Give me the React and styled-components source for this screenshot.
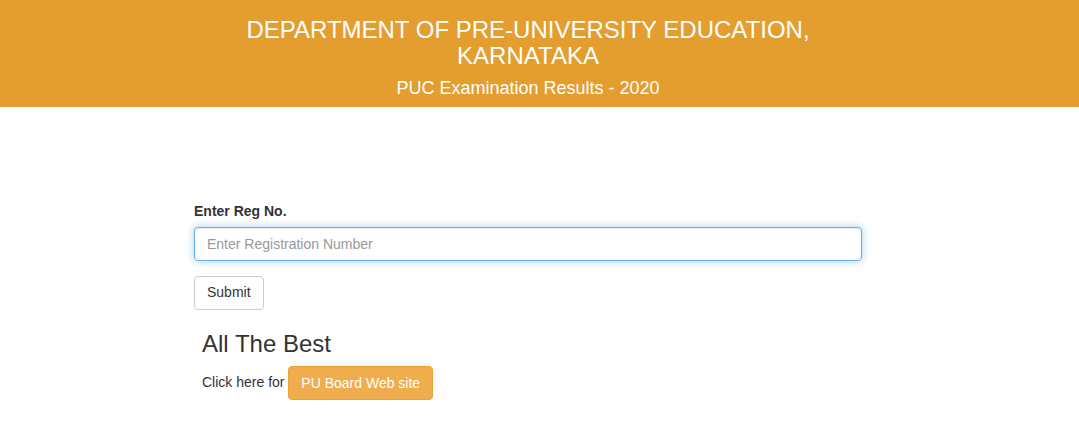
import React from "react";
import styled, { createGlobalStyle } from "styled-components";

const Global = createGlobalStyle`
  * { box-sizing: border-box; }
  html, body { margin: 0; padding: 0; background: #fff; }
  body {
    font-family: "Liberation Sans", Arial, sans-serif;
    font-size: 14px;
    line-height: 1.42857;
    color: #333;
  }
`;

const Header = styled.header`
  background: #e49d2f;
  height: 107px;
  padding-top: 17px;
`;

const HeaderInner = styled.div`
  width: 1056px;
  text-align: center;
  color: #fff;
`;

const Title = styled.h3`
  margin: 0 auto;
  width: 600px;
  font-size: 24px;
  font-weight: 400;
  line-height: 1.1;
`;

const Subtitle = styled.h4`
  margin: 9px 0 0;
  font-size: 18px;
  font-weight: 400;
  line-height: 1.1;
`;

const Main = styled.main`
  width: 1056px;
  padding-top: 95px;
`;

const Form = styled.form`
  width: 668px;
  margin: 0 auto;
`;

const FormGroup = styled.div`
  margin-bottom: 15px;
`;

const Label = styled.label`
  display: block;
  font-weight: 700;
  margin-bottom: 5px;
`;

const Input = styled.input`
  display: block;
  width: 100%;
  height: 34px;
  padding: 6px 12px;
  font-family: inherit;
  font-size: 14px;
  color: #555;
  background: #fff;
  border: 1px solid #66afe9;
  border-radius: 4px;
  outline: 0;
  box-shadow: inset 0 1px 1px rgba(0, 0, 0, 0.075), 0 0 8px rgba(102, 175, 233, 0.6);
  &::placeholder { color: #999; }
`;

const Button = styled.button`
  display: inline-block;
  height: 34px;
  padding: 6px 12px 5px;
  font-family: inherit;
  font-size: 14px;
  line-height: 1.42857;
  border-radius: 4px;
  cursor: pointer;
  vertical-align: middle;
  color: ${(p) => (p.$warning ? "#fff" : "#333")};
  background: ${(p) => (p.$warning ? "#f0ad4e" : "#fff")};
  border: 1px solid ${(p) => (p.$warning ? "#eea236" : "#ccc")};
`;

const Wish = styled.div`
  padding-left: 8px;
`;

const WishTitle = styled.h3`
  margin: 21px 0 9px;
  font-size: 24px;
  font-weight: 400;
  line-height: 1.1;
`;

const LinkLine = styled.p`
  margin: 0;
`;

export default function App() {
  return (
    <>
      <Global />
      <Header>
        <HeaderInner>
          <Title>DEPARTMENT OF PRE-UNIVERSITY EDUCATION, KARNATAKA</Title>
          <Subtitle>PUC Examination Results - 2020</Subtitle>
        </HeaderInner>
      </Header>
      <Main>
        <Form onSubmit={(e) => e.preventDefault()}>
          <FormGroup>
            <Label htmlFor="reg">Enter Reg No.</Label>
            <Input id="reg" type="text" placeholder="Enter Registration Number" autoFocus />
          </FormGroup>
          <Button type="submit">Submit</Button>
          <Wish>
            <WishTitle>All The Best</WishTitle>
            <LinkLine>
              Click here for <Button type="button" $warning>PU Board Web site</Button>
            </LinkLine>
          </Wish>
        </Form>
      </Main>
    </>
  );
}
